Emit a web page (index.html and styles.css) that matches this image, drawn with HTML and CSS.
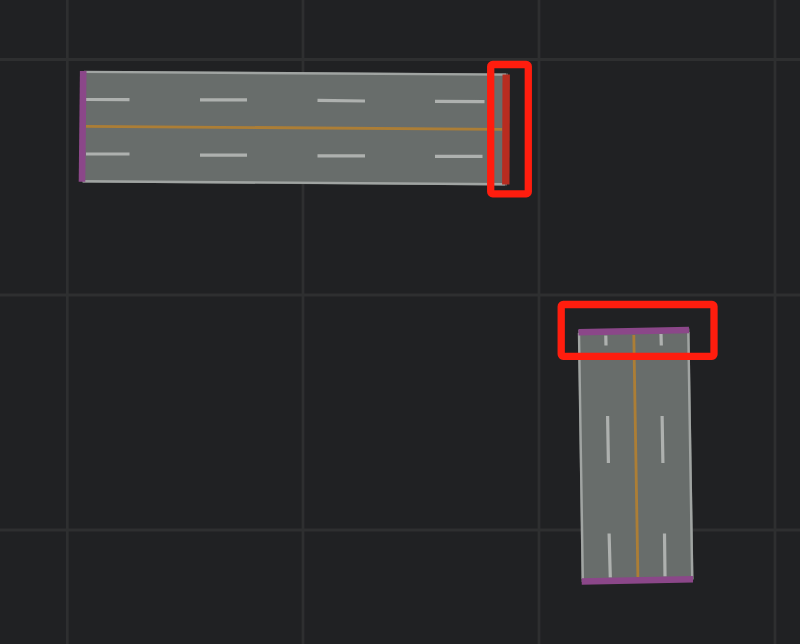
FILE: index.html
```html
<!DOCTYPE html>
<html lang="en">
<head>
<meta charset="utf-8">
<title>Road network</title>
<link rel="stylesheet" href="styles.css">
</head>
<body>
<svg class="map" viewBox="0 0 800 644" role="img" aria-label="Road map canvas">
  <path class="grid" d="M67.3 0V644M303 0V644M539 0V644M775 0V644M0 59.5H800M0 295H800M0 530H800"/>

  <g class="road">
    <path class="surface" d="M83 71L508 73.5L507 185.5L82 182.5Z"/>
    <path class="edge" d="M84 71.9L506 74.6M83 181.2L505 184.2"/>
    <path class="lane" d="M86 99.5L129.500 99.700M200 99.900H247M317.500 100.300L365 101M435 101.300L484.500 101.700M86 154H129.500M200 155.100H247M317.500 155.900H365M435 156.300H482.500"/>
    <path class="center" d="M86 126.300L502 129.300"/>
    <path class="end" d="M83.200 71L82 181.800"/>
    <path class="end selected" d="M506.200 74.500L505.800 184.500"/>
  </g>

  <g class="road">
    <path class="surface" d="M578 330L689.500 328.500L693.500 580L581.500 582Z"/>
    <path class="edge" d="M579 333L582.800 579M688.300 332L692.200 579"/>
    <path class="lane" d="M605.800 335.500L606 345.500M661 334L661.300 345.500M607.600 416L608.400 463M662.100 416L662.900 463M609.100 533.500L610.300 577.500M664.500 533.500L665 576.500"/>
    <path class="center" d="M633.800 335L637.900 577"/>
    <path class="end" d="M578.500 332.200L689 330M581.700 581.500L693 579.200"/>
  </g>

  <rect class="callout" x="490.700" y="64.500" width="37.600" height="129.300" rx="2"/>
  <rect class="callout" x="561.200" y="304.500" width="152.800" height="51.800" rx="2"/>
</svg>
</body>
</html>
```
FILE: styles.css
```css
body {
  margin: 0;
  background: #202123;
}

.map {
  display: block;
  width: 800px;
  height: 644px;
}

.map path,
.map rect {
  fill: none;
}

.grid {
  stroke: #2e2f30;
  stroke-width: 2.8;
}

.map .surface {
  fill: #686d6b;
}

.edge {
  stroke: #a0a4a2;
  stroke-width: 2.4;
}

.lane {
  stroke: #aeb1af;
  stroke-width: 3.2;
}

.center {
  stroke: #ac7e36;
  stroke-width: 2.8;
}

.end {
  stroke: #8b4789;
  stroke-width: 6.6;
}

.end.selected {
  stroke: #b82c20;
  stroke-width: 7.4;
}

.callout {
  stroke: #ff1d0e;
  stroke-width: 7.300;
}
```
